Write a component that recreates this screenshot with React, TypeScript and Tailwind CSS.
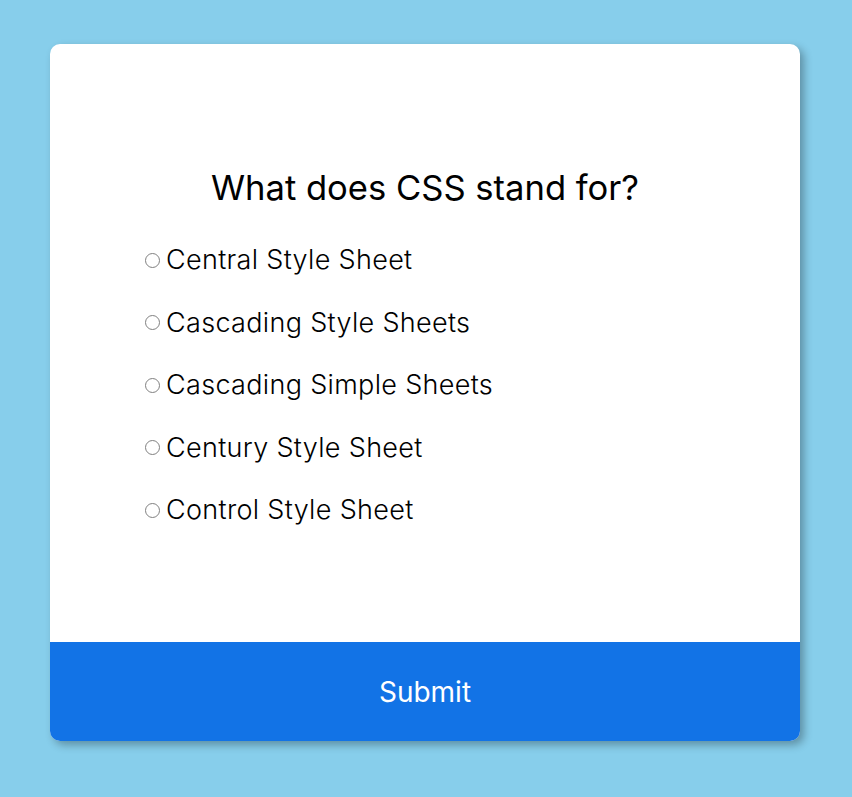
import React from 'react';

const options = [
  'Central Style Sheet',
  'Cascading Style Sheets',
  'Cascading Simple Sheets',
  'Century Style Sheet',
  'Control Style Sheet',
];

const App: React.FC = () => {
  return (
    <div className="min-h-screen w-full bg-[#87ceeb] pt-[44px] pl-[50px] font-['Inter',sans-serif]">
      <div className="w-[750px] h-[697px] bg-white rounded-[10px] shadow-[4px_4px_8px_rgba(0,0,0,0.3)] flex flex-col overflow-hidden">
        <div className="flex-1 pt-[119px] px-[95px]">
          <h2 className="text-[34.6px] leading-[48px] text-black text-center">What does CSS stand for?</h2>
          <ul className="mt-[18px] flex flex-col">
            {options.map((opt, i) => (
              <li key={i} className="flex items-center h-[62.5px]">
                <input type="radio" name="answer" id={`a${i}`} className="shrink-0 w-[15px] h-[15px] m-0 appearance-none rounded-full border-[1.5px] border-[#808080] bg-white" />
                <label htmlFor={`a${i}`} className="ml-[6px] text-[27px] tracking-[0.012em] font-light text-black">{opt}</label>
              </li>
            ))}
          </ul>
        </div>
        <button className="h-[99px] w-full bg-[#1273e6] text-white text-[28px] font-normal">Submit</button>
      </div>
    </div>
  );
};

export default App;
